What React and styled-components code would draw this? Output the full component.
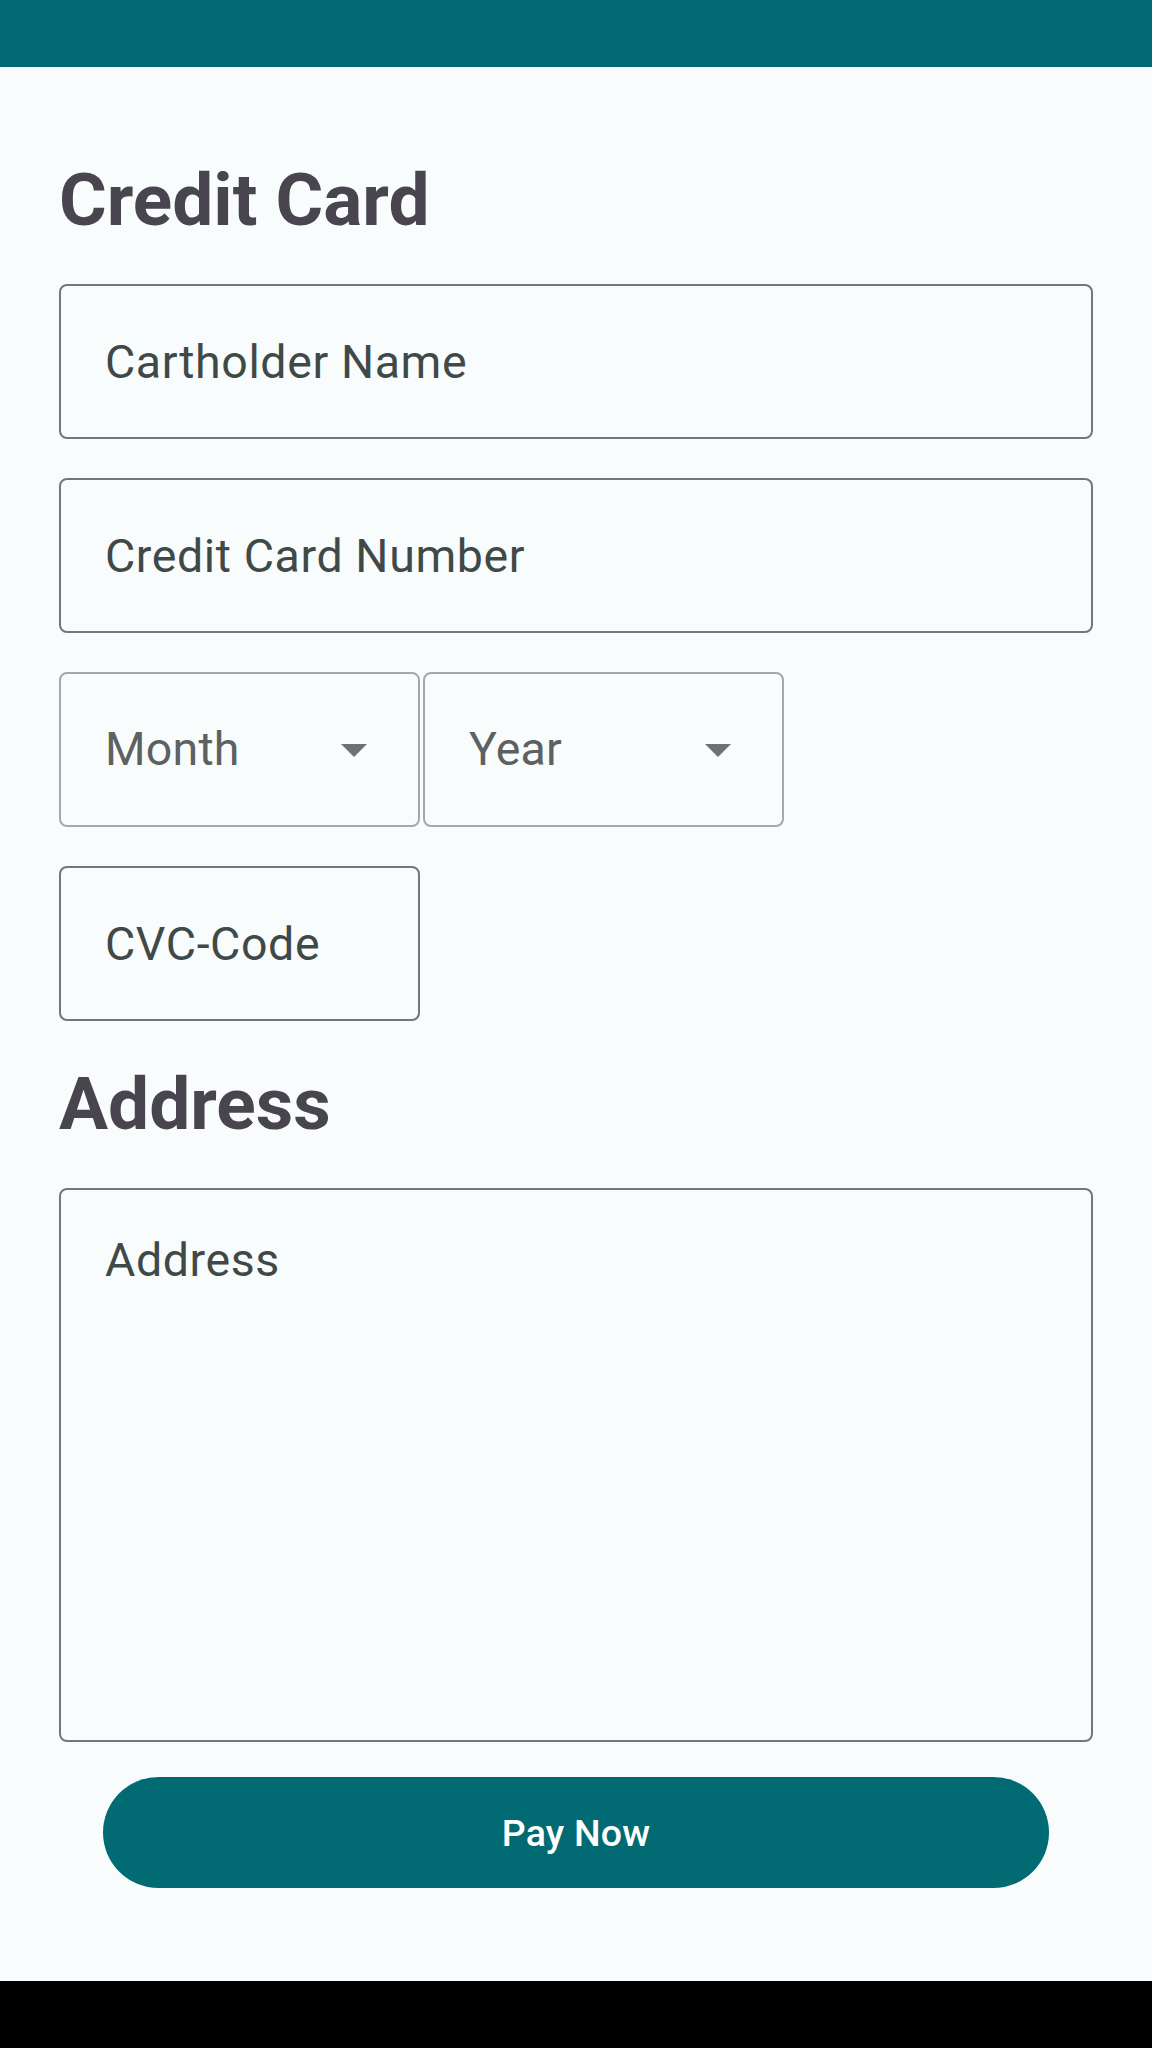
import React from "react";
import styled, { createGlobalStyle } from "styled-components";

const GlobalStyle = createGlobalStyle`
  html, body {
    margin: 0;
    padding: 0;
    background: #f9fcfc;
  }
  * {
    box-sizing: border-box;
  }
`;

const Screen = styled.div`
  display: flex;
  flex-direction: column;
  min-height: 2048px;
  background: #f9fcfc;
  font-family: Roboto, "Noto Sans", sans-serif;
`;

const StatusBar = styled.div`
  height: 67px;
  background: #016a72;
`;

const NavBar = styled.div`
  height: 67px;
  background: #000000;
`;

const Main = styled.main`
  flex: 1;
  display: flex;
  flex-direction: column;
  padding: 97px 59px 0;
`;

const Title = styled.h2`
  margin: 0 0 47px;
  font-size: 73px;
  line-height: 1;
  font-weight: 700;
  color: #49454f;
  letter-spacing: 0;
`;

const Fields = styled.div`
  display: flex;
  flex-direction: column;
  gap: 39px;
  margin-bottom: 47px;
`;

const Input = styled.input`
  display: block;
  width: ${(p) => p.$width || "100%"};
  height: 155px;
  margin: 0;
  padding: 0 44px;
  border: 2px solid #6f7979;
  border-radius: 8px;
  background: transparent;
  font-family: inherit;
  font-size: 46.5px;
  letter-spacing: 0.6px;
  color: #3f4948;
  outline: none;

  &::placeholder {
    color: #3f4948;
    opacity: 1;
  }
`;

const DateRow = styled.div`
  display: flex;
  gap: 3px;
`;

const Dropdown = styled.div`
  display: flex;
  align-items: center;
  justify-content: space-between;
  width: 361px;
  height: 155px;
  padding: 0 51px 0 44px;
  border: 2px solid #a4a8a8;
  border-radius: 8px;
  font-size: 46.5px;
  line-height: 1;
  letter-spacing: 0.2px;
  color: #5d6161;
  cursor: pointer;
`;

const Caret = styled.svg`
  width: 26px;
  height: 13px;
  margin-top: 2px;
  fill: #6e7272;
`;

const TextArea = styled.textarea`
  display: block;
  width: 100%;
  height: 554px;
  margin: 0;
  padding: 47px 44px;
  border: 2px solid #6f7979;
  border-radius: 8px;
  background: transparent;
  font-family: inherit;
  font-size: 46.5px;
  line-height: 1;
  letter-spacing: 0.6px;
  color: #3f4948;
  resize: none;
  outline: none;

  &::placeholder {
    color: #3f4948;
    opacity: 1;
  }
`;

const PayButton = styled.button`
  display: flex;
  align-items: center;
  justify-content: center;
  height: 111px;
  margin: 35px 44px 0;
  border: none;
  border-radius: 56px;
  background: #016a72;
  color: #ffffff;
  font-family: inherit;
  font-size: 37.5px;
  font-weight: 500;
  letter-spacing: 0.2px;
  cursor: pointer;
`;

const Select = ({ label }) => (
  <Dropdown>
    <span>{label}</span>
    <Caret viewBox="0 0 26 13">
      <path d="M0 0h26L13 13z" />
    </Caret>
  </Dropdown>
);

const App = () => (
  <>
    <GlobalStyle />
    <Screen>
      <StatusBar />
      <Main>
        <Title>Credit Card</Title>
        <Fields>
          <Input placeholder="Cartholder Name" />
          <Input placeholder="Credit Card Number" />
          <DateRow>
            <Select label="Month" />
            <Select label="Year" />
          </DateRow>
          <Input placeholder="CVC-Code" $width="361px" />
        </Fields>

        <Title>Address</Title>
        <TextArea placeholder="Address" />

        <PayButton>Pay Now</PayButton>
      </Main>
      <NavBar />
    </Screen>
  </>
);

export default App;
